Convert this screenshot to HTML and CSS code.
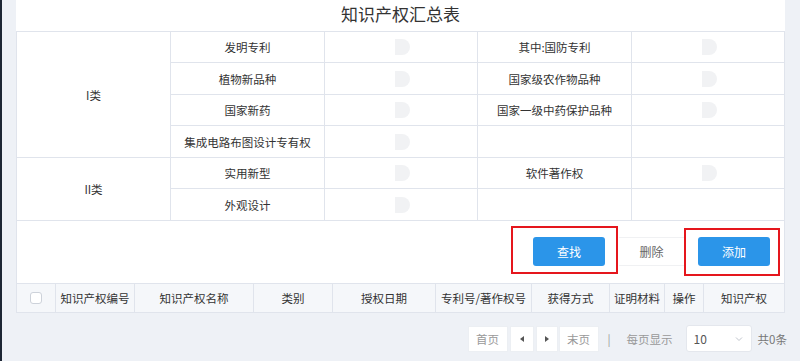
FILE: index.html
```html
<!DOCTYPE html>
<html lang="zh-CN">
<head>
  <meta charset="UTF-8" />
  <title>知识产权汇总表</title>
  <link rel="stylesheet" href="styles.css">
</head>
<body>
  <div class="edge"></div>

  <div class="page">
    <div class="panel">
      <div class="title">知识产权汇总表</div>

      <div class="summary">
        <div class="cell span4">I类</div>
        <div class="cell">发明专利</div>
        <div class="cell"><span class="knob"></span></div>
        <div class="cell">其中:国防专利</div>
        <div class="cell"><span class="knob"></span></div>

        <div class="cell">植物新品种</div>
        <div class="cell"><span class="knob"></span></div>
        <div class="cell">国家级农作物品种</div>
        <div class="cell"><span class="knob"></span></div>

        <div class="cell">国家新药</div>
        <div class="cell"><span class="knob"></span></div>
        <div class="cell">国家一级中药保护品种</div>
        <div class="cell"><span class="knob"></span></div>

        <div class="cell">集成电路布图设计专有权</div>
        <div class="cell"><span class="knob"></span></div>
        <div class="cell"></div>
        <div class="cell"></div>

        <div class="cell span2">II类</div>
        <div class="cell">实用新型</div>
        <div class="cell"><span class="knob"></span></div>
        <div class="cell">软件著作权</div>
        <div class="cell"><span class="knob"></span></div>

        <div class="cell">外观设计</div>
        <div class="cell"><span class="knob"></span></div>
        <div class="cell"></div>
        <div class="cell"></div>
      </div>

      <div class="toolbar">
        <div class="mark mark-find"><button class="btn-blue">查找</button></div>
        <button class="btn-plain">删除</button>
        <div class="mark mark-add"><button class="btn-blue">添加</button></div>
      </div>
    </div>

    <div class="thead">
      <div class="th"><span class="check"></span></div>
      <div class="th">知识产权编号</div>
      <div class="th">知识产权名称</div>
      <div class="th">类别</div>
      <div class="th">授权日期</div>
      <div class="th">专利号/著作权号</div>
      <div class="th">获得方式</div>
      <div class="th">证明材料</div>
      <div class="th">操作</div>
      <div class="th">知识产权</div>
    </div>

    <div class="pager">
      <span class="pg pg-text">首页</span>
      <span class="pg pg-prev"><i class="tri tri-left"></i></span>
      <span class="pg pg-next"><i class="tri tri-right"></i></span>
      <span class="pg pg-text pg-last">末页</span>
      <span class="sep">|</span>
      <span class="per">每页显示</span>
      <span class="select">
        10
        <svg width="8" height="6" viewBox="0 0 8 6"><polyline points="1,1.5 4,4.5 7,1.5" fill="none" stroke="#c0c4cc" stroke-width="1"/></svg>
      </span>
      <span class="total">共0条</span>
    </div>
  </div>
</body>
</html>
```

FILE: styles.css
```css
* { margin: 0; padding: 0; box-sizing: border-box; }
body {
  display: flex;
  height: 361px;
  overflow: hidden;
  background: #eef1f6;
  font-family: "Noto Sans CJK SC", "Noto Sans", sans-serif;
  color: #333;
}
.edge {
  flex: none;
  width: 2px;
  background: #1d2634;
}
.page {
  flex: none;
  width: 769px;
  margin-left: 14px;
}
.panel { background: #fff; }
.title {
  height: 31px;
  line-height: 28px;
  text-align: center;
  font-size: 17px;
  color: #333;
}

/* summary grid */
.summary {
  display: grid;
  grid-template-columns: 153px 153px 152px 153px 152px;
  grid-template-rows: 30px 31px 30px 31px 30px 31px;
  gap: 1px;
  background: #e0e4ec;
  border: 1px solid #e0e4ec;
}
.cell {
  display: flex;
  align-items: center;
  justify-content: center;
  background: #fff;
  font-size: 11.5px;
  color: #333;
}
.span4 { grid-row: span 4; }
.span2 { grid-row: span 2; }
.knob {
  display: block;
  width: 15px;
  height: 16px;
  margin-left: 3px;
  border-radius: 0 8px 8px 0;
  background: #f1f2f4;
}

/* toolbar */
.toolbar {
  display: flex;
  justify-content: flex-end;
  align-items: flex-start;
  height: 62px;
  padding-right: 4px;
  border-left: 1px solid #e0e4ec;
  border-right: 1px solid #e0e4ec;
}
.mark { border: 2px solid #e5161d; }
.mark-find {
  margin-top: 5px;
  padding: 9px 11px 6px 20px;
}
.mark-add {
  margin-top: 7px;
  padding: 7px 8px 8px 12px;
}
.btn-blue {
  display: block;
  width: 72px;
  height: 29px;
  border: none;
  border-radius: 3px;
  background: #2b95e9;
  color: #fff;
  font-family: inherit;
  font-size: 12px;
}
.btn-plain {
  width: 65px;
  height: 29px;
  margin: 16px 0 0 1px;
  border: 1px solid #f0f1f3;
  border-left: none;
  border-right: none;
  background: #fff;
  color: #666;
  font-family: inherit;
  font-size: 12px;
}

/* list header */
.thead {
  display: grid;
  grid-template-columns: 38px 78px 118px 78px 102px 95px 77px 54px 38px 80px;
  gap: 1px;
  height: 30px;
  background: #e0e4ec;
  border: 1px solid #e0e4ec;
}
.th {
  display: flex;
  align-items: center;
  justify-content: center;
  background: #f5f7fa;
  font-size: 11.5px;
  color: #333;
}
.check {
  width: 12px;
  height: 12px;
  border: 1px solid #cdd2da;
  border-radius: 3px;
  background: #fff;
}

/* pager */
.pager {
  display: flex;
  justify-content: flex-end;
  align-items: center;
  height: 27px;
  margin: 12px -2px 0 0;
  font-size: 11.5px;
  color: #999;
}
.pg {
  display: flex;
  align-items: center;
  justify-content: center;
  height: 26px;
  background: #fff;
  border: 1px solid #eceff3;
}
.pg-text { width: 40px; }
.pg-prev { width: 24px; margin-left: 2px; }
.pg-next { width: 22px; margin-left: 2px; }
.pg-last { margin-left: 1px; }
.tri {
  width: 0;
  height: 0;
  border-top: 3px solid transparent;
  border-bottom: 3px solid transparent;
}
.tri-left { border-right: 4px solid #555; }
.tri-right { border-left: 4px solid #555; }
.sep { margin-left: 9px; color: #999; }
.per { margin-left: 16px; }
.select {
  display: flex;
  align-items: center;
  justify-content: space-between;
  width: 66px;
  height: 27px;
  margin-left: 13px;
  padding: 0 8px 0 7px;
  background: #fff;
  border: 1px solid #e4e7ed;
  border-radius: 3px;
  color: #555;
  font-size: 12px;
}
.total { margin-left: 6px; color: #777; }
```
